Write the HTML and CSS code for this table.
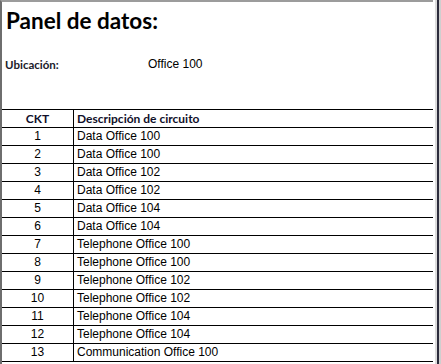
FILE: index.html
```html
<!DOCTYPE html>
<html lang="es">
<head>
<meta charset="utf-8">
<title>Panel de datos</title>
<link rel="stylesheet" href="styles.css">
</head>
<body>
<div class="sheet">
  <div class="main">
    <h1 class="title">Panel de datos:</h1>
    <div class="loc">
      <span class="loc-label">Ubicación:</span>
      <span class="loc-value">Office 100</span>
    </div>
    <table class="ckt">
      <thead>
        <tr><th class="num">CKT</th><th class="desc">Descripción de circuito</th></tr>
      </thead>
      <tbody>
        <tr><td class="num">1</td><td class="desc">Data Office 100</td></tr>
        <tr><td class="num">2</td><td class="desc">Data Office 100</td></tr>
        <tr><td class="num">3</td><td class="desc">Data Office 102</td></tr>
        <tr><td class="num">4</td><td class="desc">Data Office 102</td></tr>
        <tr><td class="num">5</td><td class="desc">Data Office 104</td></tr>
        <tr><td class="num">6</td><td class="desc">Data Office 104</td></tr>
        <tr><td class="num">7</td><td class="desc">Telephone Office 100</td></tr>
        <tr><td class="num">8</td><td class="desc">Telephone Office 100</td></tr>
        <tr><td class="num">9</td><td class="desc">Telephone Office 102</td></tr>
        <tr><td class="num">10</td><td class="desc">Telephone Office 102</td></tr>
        <tr><td class="num">11</td><td class="desc">Telephone Office 104</td></tr>
        <tr><td class="num">12</td><td class="desc">Telephone Office 104</td></tr>
        <tr><td class="num">13</td><td class="desc">Communication Office 100</td></tr>
      </tbody>
    </table>
  </div>
  <div class="gutter">
    <div class="g-gap"></div>
    <div class="g-light"></div>
    <div class="g-dark"></div>
    <div class="g-edge"></div>
  </div>
</div>
</body>
</html>
```

FILE: styles.css
```css
html, body {
  margin: 0;
  padding: 0;
  background: #ffffff;
}
body {
  width: 441px;
  height: 364px;
  overflow: hidden;
}
.sheet {
  display: flex;
  height: 364px;
}
.main {
  width: 431px;
  border-left: 2px solid #6e6e6e;
  border-top: 2px solid #9c9c9c;
  overflow: hidden;
}
.title {
  margin: 7px 0 0 4px;
  font-family: Lato, "Liberation Sans", sans-serif;
  font-weight: 700;
  font-size: 22.5px;
  line-height: 24px;
  color: #000;
}
.loc {
  display: flex;
  margin: 24px 0 0 3px;
  height: 14px;
  align-items: center;
}
.loc-label {
  width: 143px;
  font-family: Lato, "Liberation Sans", sans-serif;
  font-weight: 700;
  font-size: 11.5px;
  color: #1a1a2a;
}
.loc-value {
  font-family: "Liberation Sans", Arial, sans-serif;
  font-size: 12px;
  color: #000;
}
.ckt {
  margin-top: 38px;
  width: 100%;
  border-collapse: collapse;
  table-layout: fixed;
}
.ckt th, .ckt td {
  height: 17px;
  padding: 0;
  border-top: 1px solid #000;
  border-bottom: 1px solid #000;
  font-size: 12px;
  line-height: 17px;
  color: #000;
}
.ckt .num {
  width: 71px;
  text-align: center;
  border-right: 1px solid #000;
}
.ckt .desc {
  text-align: left;
  padding-left: 3px;
}
.ckt th {
  font-family: Lato, "Liberation Sans", sans-serif;
  font-weight: 700;
  font-size: 12px;
  color: #10102a;
}
.ckt td {
  font-family: "Liberation Sans", Arial, sans-serif;
}
.gutter {
  display: flex;
  width: 8px;
}
.g-gap { width: 2px; background: #ffffff; }
.g-light { width: 2px; background: #dcdcdc; }
.g-dark { width: 2px; background: #2c2c3c; }
.g-edge { width: 2px; background: #cfcfcf; }
```
